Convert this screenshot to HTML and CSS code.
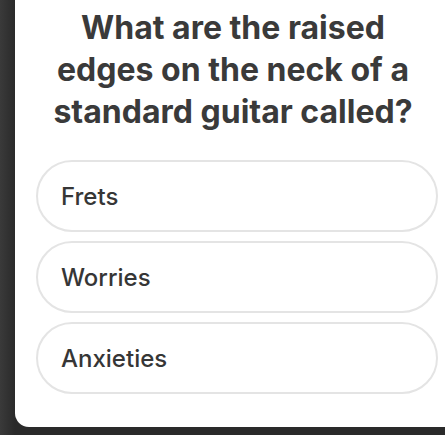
FILE: index.html
```html
<!DOCTYPE html>
<html>
<head>
<meta charset="utf-8">
<link rel="stylesheet" href="styles.css">
</head>
<body>
<div class="screen">
  <div class="card">
    <h1 class="question">What are the raised edges on the neck of a standard guitar called?</h1>
    <div class="options">
      <div class="option">Frets</div>
      <div class="option">Worries</div>
      <div class="option">Anxieties</div>
    </div>
  </div>
</div>
</body>
</html>
```
FILE: styles.css
```css
html, body {
  margin: 0;
  padding: 0;
  background: #2c2c2c;
}
.screen {
  width: 445px;
  height: 435px;
  overflow: hidden;
  background: linear-gradient(90deg, #3a3a3a 0px, #2a2a2a 15px);
}
.card {
  margin-left: 15px;
  width: 450px;
  height: 427px;
  background: #fff;
  border-bottom-left-radius: 14px;
  box-sizing: border-box;
  padding-top: 7px;
  font-family: "Inter", "Liberation Sans", sans-serif;
}
.question {
  margin: 0 0 0 29px;
  width: 378px;
  text-align: center;
  font-size: 32px;
  line-height: 42px;
  font-weight: 700;
  color: #3a3a3a;
}
.options {
  margin-top: 27px;
  margin-left: 21px;
  width: 402px;
  display: flex;
  flex-direction: column;
  gap: 9px;
}
.option {
  height: 72px;
  box-sizing: border-box;
  border: 2px solid #e4e4e4;
  border-radius: 36px;
  display: flex;
  align-items: center;
  padding-left: 23px;
  font-size: 24px;
  font-weight: 500;
  color: #363636;
}
```
